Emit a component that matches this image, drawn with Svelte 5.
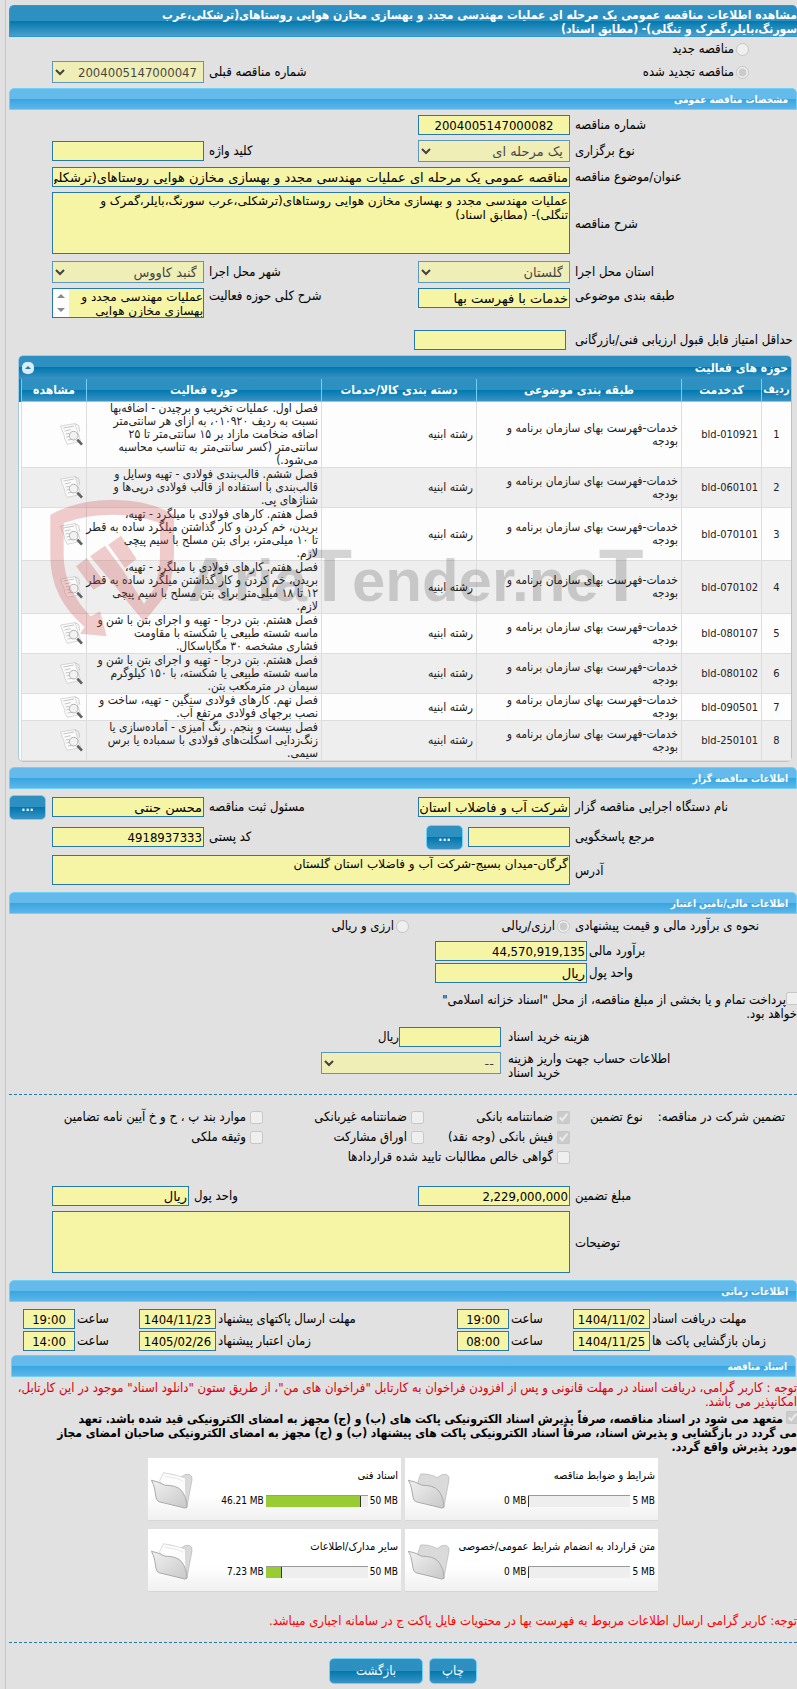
<script>
  const rows = [
    { code: 'bld-010921', text: 'فصل اول. عملیات تخریب و برچیدن - اضافه‌بها\nنسبت به ردیف ۰۱۰۹۲۰، به ازای هر سانتی‌متر\nاضافه ضخامت مازاد بر ۱۵ سانتی‌متر تا ۲۵\nسانتی‌متر (کسر سانتی‌متر به تناسب محاسبه\nمی‌شود.)' },
    { code: 'bld-060101', text: 'فصل ششم. قالب‌بندی فولادی - تهیه وسایل و\nقالب‌بندی با استفاده از قالب فولادی درپی‌ها و\nشناژهای پی.' },
    { code: 'bld-070101', text: 'فصل هفتم. کارهای فولادی با میلگرد - تهیه،\nبریدن، خم کردن و کار گذاشتن میلگرد ساده به قطر\nتا ۱۰ میلی‌متر، برای بتن مسلح با سیم پیچی\nلازم.' },
    { code: 'bld-070102', text: 'فصل هفتم. کارهای فولادی با میلگرد - تهیه،\nبریدن، خم کردن و کار گذاشتن میلگرد ساده به قطر\n۱۲ تا ۱۸ میلی‌متر برای بتن مسلح با سیم پیچی\nلازم.' },
    { code: 'bld-080107', text: 'فصل هشتم. بتن درجا - تهیه و اجرای بتن با شن و\nماسه شسته طبیعی یا شکسته با مقاومت\nفشاری مشخصه ۳۰ مگاپاسکال.' },
    { code: 'bld-080102', text: 'فصل هشتم. بتن درجا - تهیه و اجرای بتن با شن و\nماسه شسته طبیعی یا شکسته، با ۱۵۰ کیلوگرم\nسیمان در مترمکعب بتن.' },
    { code: 'bld-090501', text: 'فصل نهم. کارهای فولادی سنگین - تهیه، ساخت و\nنصب برجهای فولادی مرتفع آب.' },
    { code: 'bld-250101', text: 'فصل بیست و پنجم. رنگ آمیزی - آماده‌سازی یا\nزنگ‌زدایی اسکلت‌های فولادی با سمباده یا برس\nسیمی.' }
  ];
  const docs = [
    { name: 'شرایط و ضوابط مناقصه', max: '5 MB', used: '0 MB', pct: 0 },
    { name: 'اسناد فنی', max: '50 MB', used: '46.21 MB', pct: 93 },
    { name: 'متن قرارداد به انضمام شرایط عمومی/خصوصی', max: '5 MB', used: '0 MB', pct: 0 },
    { name: 'سایر مدارک/اطلاعات', max: '50 MB', used: '7.23 MB', pct: 16 }
  ];
</script>

{#snippet sheetIcon()}
  <svg class="sheet" viewBox="0 0 69 69" aria-hidden="true">
    <path d="M2 9 L45 2 L62 55 L22 64 Q12 48 12 36 Q6 24 2 9Z" fill="#fbfbfb" stroke="#c4c4c4" stroke-width="2" />
    <path d="M10 15 L42 9 M14 24 L32 20 M17 33 L28 31 M19 42 L30 40 M23 51 L42 48" stroke="#c6c6c6" stroke-width="3" />
    <path d="M45 2 L56 8 L59 26" fill="none" stroke="#b5b5b5" stroke-width="2" />
    <circle cx="41" cy="38" r="13" fill="#f0f0f0" fill-opacity=".85" stroke="#b2b2b2" stroke-width="3" />
    <path d="M52 50 L66 65" stroke="#606060" stroke-width="8" />
  </svg>
{/snippet}

{#snippet folderIcon(full)}
  <svg class="folder" viewBox="0 0 130 112" aria-hidden="true">
    <defs>
      <linearGradient id="fold" x1="0" y1="0" x2="1" y2="1">
        <stop offset="0" stop-color="#f1f1f1" /><stop offset="1" stop-color="#c8c8c8" />
      </linearGradient>
    </defs>
    <path d="M30 30 L38 6 Q56 4 76 11 L88 17 Q104 4 116 7 Q126 12 124 24 L108 108 L30 88Z" fill="#dadada" stroke="#b4b4b4" stroke-width="2" />
    {#if full}
      <path d="M26 26 L38 2 L76 10 L104 18 L106 90 L40 70Z" fill="#fcfcfc" stroke="#cccccc" stroke-width="2" />
      <path d="M40 12 L80 20 L98 28" fill="none" stroke="#dddddd" stroke-width="2" />
    {/if}
    <path d="M1 25 Q20 28 42 40 Q76 40 90 54 Q108 74 109 106 Q104 112 94 107 L24 90 Q17 87 15 76 L11 52 Q9 38 1 25Z" fill="url(#fold)" stroke="#a9a9a9" stroke-width="3" />
  </svg>
{/snippet}

<div class="page" dir="rtl">
  <h1>مشاهده اطلاعات مناقصه عمومی یک مرحله ای عملیات مهندسی مجدد و بهسازی مخازن هوایی روستاهای(ترشکلی،عرب<br />سورنگ،بایلر،گمرک و تنگلی)- (مطابق اسناد)</h1>

  <div class="kind"><label><input type="radio" name="kind" disabled />مناقصه جدید</label></div>
  <div class="form">
    <label class="kind again"><input type="radio" name="kind" disabled checked />مناقصه تجدید شده</label>
    <label class="lbl" for="prev">شماره مناقصه قبلی</label>
    <select id="prev" class="num" disabled><option>2004005147000047</option></select>
  </div>

  <h2>مشخصات مناقصه عمومی</h2>
  <div class="form">
    <label class="lbl" for="num">شماره مناقصه</label>
    <input id="num" class="num mid" value="2004005147000082" readonly />
  </div>
  <div class="form">
    <label class="lbl" for="type">نوع برگزاری</label>
    <select id="type" disabled><option>یک مرحله ای</option></select>
    <label class="lbl" for="key">کلید واژه</label>
    <input id="key" readonly />
  </div>
  <div class="form">
    <label class="lbl" for="title">عنوان/موضوع مناقصه</label>
    <input id="title" class="wide" value="مناقصه عمومی یک مرحله ای عملیات مهندسی مجدد و بهسازی مخازن هوایی روستاهای(ترشکلی،عرب سورنگ،بایلر،گمرک و تنگلی)" readonly />
  </div>
  <div class="form">
    <label class="lbl" for="desc">شرح مناقصه</label>
    <textarea id="desc" class="wide tall" readonly value={'عملیات مهندسی مجدد و بهسازی مخازن هوایی روستاهای(ترشکلی،عرب سورنگ،بایلر،گمرک و\nتنگلی)- (مطابق اسناد)'}></textarea>
  </div>
  <div class="form">
    <label class="lbl" for="prov">استان محل اجرا</label>
    <select id="prov" disabled><option>گلستان</option></select>
    <label class="lbl" for="city">شهر محل اجرا</label>
    <select id="city" disabled><option>گنبد کاووس</option></select>
  </div>
  <div class="form top">
    <label class="lbl" for="cat">طبقه بندی موضوعی</label>
    <input id="cat" value="خدمات با فهرست بها" readonly />
    <label class="lbl" for="act">شرح کلی حوزه فعالیت</label>
    <div class="scrollbox">
      <textarea id="act" readonly value={'عملیات مهندسی مجدد و\nبهسازی مخازن هوایی'}></textarea>
      <svg viewBox="0 0 16 28" aria-hidden="true"><path d="M4 9 L8 5 L12 9Z M4 19 L8 23 L12 19Z" fill="#8a8a8a" /></svg>
    </div>
  </div>
  <div class="form score">
    <label class="lbl" for="score">حداقل امتیاز قابل قبول ارزیابی فنی/بازرگانی</label>
    <input id="score" readonly />
  </div>

  <section class="panel">
    <header>
      <span>حوزه های فعالیت</span>
      <button class="fold" aria-label="بستن"><svg viewBox="0 0 12 12"><path d="M3 7 L6 4 L9 7Z" fill="#2779aa" /></svg></button>
    </header>
    <table>
      <colgroup><col class="c1" /><col class="c2" /><col class="c3" /><col class="c4" /><col /><col class="c6" /></colgroup>
      <thead>
        <tr><th class="first">ردیف</th><th>کدخدمت</th><th>طبقه بندی موضوعی</th><th>دسته بندی کالا/خدمات</th><th>حوزه فعالیت</th><th>مشاهده</th></tr>
      </thead>
      <tbody>
        {#each rows as r, i}
          <tr>
            <td class="n">{i + 1}</td>
            <td class="code"><bdi>{r.code}</bdi></td>
            <td>{'خدمات-فهرست بهای سازمان برنامه و\nبودجه'}</td>
            <td>رشته ابنیه</td>
            <td>{r.text}</td>
            <td class="view">{@render sheetIcon()}</td>
          </tr>
        {/each}
      </tbody>
    </table>
    <svg class="mark" viewBox="0 0 1800 420" aria-hidden="true">
      <g fill="#d04a50" fill-opacity=".28">
        <path d="M1 50 Q85 5 187 5 Q295 5 372 50 L372 170 Q372 245 340 300 L282 372 L175 240 L220 218 L282 318 L310 275 Q330 225 330 170 L330 75 Q265 50 187 50 Q110 50 41 75 L41 175 Q43 275 122 355 L150 340 L170 415 L90 407 L104 387 Q1 300 1 175Z" />
        <path d="M78 205 L110 180 L165 255 L130 275Z M120 175 L165 143 L220 218 L175 240Z M175 140 L213 113 L260 183 L225 210Z" />
      </g>
      <text x="414" y="309"><tspan class="cap">A</tspan>ria<tspan class="tee">T</tspan>ender.ne<tspan class="tee">T</tspan></text>
    </svg>
  </section>

  <h2>اطلاعات مناقصه گزار</h2>
  <div class="form btnrow">
    <label class="lbl" for="org">نام دستگاه اجرایی مناقصه گزار</label>
    <input id="org" value="شرکت آب و فاضلاب استان" readonly />
    <label class="lbl" for="resp">مسئول ثبت مناقصه</label>
    <input id="resp" value="محسن جنتی" readonly />
    <button class="dots">...</button>
  </div>
  <div class="form btnrow">
    <label class="lbl" for="ref">مرجع پاسخگویی</label>
    <div class="pair"><input id="ref" readonly /><button class="dots">...</button></div>
    <label class="lbl" for="zip">کد پستی</label>
    <input id="zip" class="num" value="4918937333" readonly />
  </div>
  <div class="form">
    <label class="lbl" for="addr">آدرس</label>
    <textarea id="addr" class="wide short" readonly value={'گرگان-میدان بسیج-شرکت آب و فاضلاب استان گلستان'}></textarea>
  </div>

  <h2>اطلاعات مالی/تامین اعتبار</h2>
  <div class="form radios">
    <span class="lbl">نحوه ی برآورد مالی و قیمت پیشنهادی</span>
    <label class="opt"><input type="radio" name="cur" disabled checked />ارزی/ریالی</label>
    <label class="opt second"><input type="radio" name="cur" disabled />ارزی و ریالی</label>
  </div>
  <div class="money">
    <label class="lbl" for="est">برآورد مالی</label><input id="est" class="num" value="44,570,919,135" readonly />
    <label class="lbl" for="unit">واحد پول</label><input id="unit" value="ریال" readonly />
  </div>
  <label class="treasury"><input type="checkbox" disabled />پرداخت تمام و یا بخشی از مبلغ مناقصه، از محل "اسناد خزانه اسلامی"<br />خواهد بود.</label>
  <div class="fees">
    <label class="lbl" for="fee">هزینه خرید اسناد</label>
    <div class="rial"><input id="fee" readonly /><span>ریال</span></div>
    <label class="lbl two" for="acc">اطلاعات حساب جهت واریز هزینه<br />خرید اسناد</label>
    <select id="acc" disabled><option>--</option></select>
  </div>
  <hr />

  <div class="guar">
    <div class="gl"><span>تضمین شرکت در مناقصه:</span><span>نوع تضمین</span></div>
    <label class="opt"><input type="checkbox" disabled checked />ضمانتنامه بانکی</label>
    <label class="opt"><input type="checkbox" disabled />ضمانتنامه غیربانکی</label>
    <label class="opt"><input type="checkbox" disabled />موارد بند پ ، ح و خ آیین نامه تضامین</label>
    <label class="opt start"><input type="checkbox" disabled checked />فیش بانکی (وجه نقد)</label>
    <label class="opt"><input type="checkbox" disabled />اوراق مشارکت</label>
    <label class="opt"><input type="checkbox" disabled />وثیقه ملکی</label>
    <label class="opt start all"><input type="checkbox" disabled />گواهی خالص مطالبات تایید شده قراردادها</label>
  </div>
  <div class="form amount">
    <label class="lbl" for="amt">مبلغ تضمین</label>
    <input id="amt" class="num" value="2,229,000,000" readonly />
    <label class="lbl" for="unit2">واحد پول</label>
    <input id="unit2" value="ریال" readonly />
  </div>
  <div class="form">
    <label class="lbl" for="note">توضیحات</label>
    <textarea id="note" class="wide tall" readonly></textarea>
  </div>

  <h2>اطلاعات زمانی</h2>
  <div class="times">
    <label class="lbl" for="d1">مهلت دریافت اسناد</label><input id="d1" class="num" value="1404/11/02" readonly />
    <label class="lbl" for="h1">ساعت</label><input id="h1" class="num" value="19:00" readonly />
    <label class="lbl" for="d2">مهلت ارسال پاکتهای پیشنهاد</label><input id="d2" class="num" value="1404/11/23" readonly />
    <label class="lbl" for="h2">ساعت</label><input id="h2" class="num" value="19:00" readonly />
    <label class="lbl" for="d3">زمان بازگشایی پاکت ها</label><input id="d3" class="num" value="1404/11/25" readonly />
    <label class="lbl" for="h3">ساعت</label><input id="h3" class="num" value="08:00" readonly />
    <label class="lbl" for="d4">زمان اعتبار پیشنهاد</label><input id="d4" class="num" value="1405/02/26" readonly />
    <label class="lbl" for="h4">ساعت</label><input id="h4" class="num" value="14:00" readonly />
  </div>

  <h2 class="docsbar">اسناد مناقصه</h2>
  <p class="warn">توجه : کاربر گرامی، دریافت اسناد در مهلت قانونی و پس از افزودن فراخوان به کارتابل "فراخوان های من"، از طریق ستون "دانلود اسناد" موجود در این کارتابل،<br />امکانپذیر می باشد.</p>
  <label class="pledge"><input type="checkbox" disabled checked />متعهد می شود در اسناد مناقصه، صرفاً پذیرش اسناد الکترونیکی پاکت های (ب) و (ج) مجهز به امضای الکترونیکی قید شده باشد. تعهد<br />می گردد در بازگشایی و پذیرش اسناد، صرفاً اسناد الکترونیکی پاکت های پیشنهاد (ب) و (ج) مجهز به امضای الکترونیکی صاحبان امضای مجاز<br />مورد پذیرش واقع گردد.</label>
  <div class="cards">
    {#each docs as d}
      <article>
        <div class="info">
          <h3>{d.name}</h3>
          <div class="meter">
            <bdi>{d.max}</bdi>
            <div class="track"><div class="fill" style="width: {d.pct}%"></div></div>
            <bdi>{d.used}</bdi>
          </div>
        </div>
        {@render folderIcon(d.pct > 0)}
      </article>
    {/each}
  </div>
  <p class="note">توجه: کاربر گرامی ارسال اطلاعات مربوط به فهرست بها در محتویات فایل پاکت ج در سامانه اجباری میباشد.</p>
  <hr />
  <div class="actions"><button>چاپ</button><button class="back">بازگشت</button></div>
</div>

<style>
  :global(body) { background: #e1e1e1; }
  .page {
    box-sizing: border-box; margin-left: 5px; padding: 5px 0 5px 3px;
    border-left: 1px solid #c8c8c8; overflow: hidden;
    font: 13px/14px "DejaVu Sans Condensed", "DejaVu Sans", sans-serif; color: #000;
  }
  .page :global(*) { box-sizing: border-box; }
  h1, h2, h3, p { margin: 0; font-weight: bold; }
  h1 {
    font-size: 12px; line-height: 14px; color: #fff; padding-top: 2px; white-space: nowrap;
    border: 1px solid #2f96dc; border-right: 0; border-radius: 5px 5px 0 0;
    background: linear-gradient(#2d90c0 50%, #0078ae 50%, #4b9fcb);
  }
  h2 {
    height: 22px; margin-top: 5px; padding: 0 8px; font-size: 10px; line-height: 21px; color: #fff;
    border: 1px solid #70d0f8; border-radius: 5px 5px 0 0;
    background: linear-gradient(#64baea 50%, #38a5e0 50%, #5cb6ea);
  }
  input, textarea, select {
    width: 100%; min-width: 0; margin: 0; border: 1px solid #2779aa; border-radius: 0;
    background: #f6f4a5; color: #000; font-family: "DejaVu Sans", sans-serif; font-size: 13px;
  }
  input { height: 20px; padding: 1px 1px 0; }
  select { height: 22px; padding: 0 2px; }
  .num { font-family: "DejaVu Sans Condensed", "DejaVu Sans", sans-serif; }
  textarea { display: block; resize: none; overflow: hidden; padding: 1px; font-size: 12px; line-height: 14px; }
  input[type='radio'], input[type='checkbox'] { width: 13px; height: 13px; flex: none; padding: 0; }
  .mid, .times input { text-align: center; }
  .form {
    display: grid; grid-template-columns: 222px 152px 1fr 152px 38px; column-gap: 5px;
    align-items: center; margin-top: 5px;
  }
  .lbl { text-align: left; white-space: nowrap; }
  .wide { grid-column: 2 / 5; }
  .tall { height: 62px; margin-bottom: 2px; }
  .short { height: 30px; margin-bottom: 2px; }
  .top { align-items: start; }
  .top .lbl { padding-top: 1px; }
  .kind { display: flex; align-items: center; height: 24px; padding-right: 48px; }
  .kind label { display: flex; align-items: center; gap: 2px; }
  .again { grid-column: 1 / 3; gap: 2px; height: 22px; }
  .kind + .form { margin-top: 0; }
  .scrollbox { display: flex; height: 30px; border: 1px solid #2779aa; }
  .scrollbox textarea { flex: 1; border: 0; height: 28px; padding: 1px 0 0; }
  .scrollbox svg { width: 16px; background: #fff; flex: none; }
  .score { column-gap: 9px; margin-top: 12px; }
  .panel { position: relative; margin: 5px 5px 0 9px; padding-left: 2px; border: 1px solid #a6c9e2; border-radius: 5px; background: #fff; }
  .panel header {
    display: flex; justify-content: space-between; align-items: center; height: 23px; margin-left: -2px; padding: 0 3px;
    border-radius: 4px 4px 0 0; color: #fff; font-size: 12px; font-weight: bold;
    background: linear-gradient(#2d90c0 50%, #0078ae 50%, #3a93c4);
  }
  .fold { width: 12px; height: 12px; padding: 0; border: 0; border-radius: 5px; background: #dcebf8; }
  .fold svg { display: block; }
  table { width: 100%; table-layout: fixed; border-collapse: separate; border-spacing: 0; }
  .c1 { width: 30px; } .c2 { width: 80px; } .c3 { width: 205px; } .c4 { width: 155px; } .c6 { width: 65px; }
  th {
    height: 23px; padding: 0; font-size: 12px; line-height: 14px; color: #fff; white-space: nowrap; overflow: hidden;
    border-left: 1px solid #70d0f8; border-bottom: 1px solid #70d0f8;
    background: linear-gradient(#2d90c0 50%, #0078ae 50%, #3a93c4);
  }
  th.first { font-size: 11px; }
  th:last-child { box-shadow: -2px 0 0 #0f80b4; }
  td {
    padding: 0 3px 0 0; font-size: 12px; line-height: 13px; color: #222; white-space: pre; vertical-align: middle;
    border-left: 1px solid #dddddd; border-bottom: 1px solid #dddddd; background: #fdfdfd;
  }
  tr:nth-child(even) td { background: #eee; }
  td.n { padding: 0; text-align: center; }
  td.n, td.code { font-size: 11px; }
  .sheet { display: block; width: 23px; height: 23px; }
  .mark { position: absolute; left: 31px; top: 142px; width: 600px; height: 140px; pointer-events: none; }
  .mark text { direction: ltr; font: bold 180px "Liberation Sans", sans-serif; fill: #000; fill-opacity: .16; }
  .mark .cap { font-size: 190px; }
  .mark .tee { font-size: 220px; }
  button {
    height: 26px; padding: 0; color: #fff; font-family: inherit; font-size: 13px; line-height: 14px;
    border: 1px solid #70d0f8; border-radius: 5px; background: linear-gradient(#2d90c0 50%, #0078ae 50%, #3a93c4);
  }
  .btnrow { min-height: 26px; }
  .btnrow + .btnrow { margin-top: 4px; }
  .dots { width: 37px; height: 25px; font-size: 12px; font-weight: bold; }
  .form > .dots { justify-self: end; }
  .pair { display: flex; gap: 5px; padding-left: 8px; }
  .pair input { flex: 1; align-self: center; }
  .opt { display: flex; align-items: center; gap: 4px; white-space: nowrap; }
  .radios .opt { gap: 2px; height: 13px; }
  .radios .second { padding-right: 4px; }
  .money { display: grid; grid-template-columns: 208px 152px; gap: 2px; align-items: center; margin-top: 8px; }
  .treasury { display: block; margin-top: 9px; }
  .treasury input, .pledge input { vertical-align: -1px; margin-right: -2px; }
  .pledge input { margin-left: 3px; }
  .fees { display: grid; grid-template-columns: 289px 180px; column-gap: 7px; row-gap: 5px; align-items: center; margin-top: 6px; }
  .rial { display: flex; align-items: center; }
  .rial input { width: 102px; }
  .two { margin-bottom: -6px; }
  hr { margin: 20px 0 0; border: 0; border-top: 1px dashed #2779aa; }
  .guar { display: grid; grid-template-columns: 227px 146px 161px 1fr; grid-auto-rows: 20px; align-items: center; margin-top: 12px; }
  .gl { display: flex; gap: 15px; padding-right: 12px; white-space: nowrap; }
  .start { grid-column-start: 2; }
  .all { grid-column-end: 5; }
  .amount { grid-template-columns: 222px 152px 1fr 137px 38px; margin-top: 19px; }
  .times { display: grid; grid-template-columns: 145px 77px 60px 52px 1fr 77px 60px 52px 12px; gap: 2px; align-items: center; margin-top: 7px; }
  .times label:nth-of-type(4n + 1) { grid-column-start: 1; }
  .docsbar { margin: 4px 1px 0 2px; }
  .warn { margin-top: 4px; color: #d8000c; font-weight: normal; white-space: nowrap; }
  .pledge { display: block; margin-top: 2px; font-size: 12px; font-weight: bold; white-space: nowrap; }
  .cards { display: grid; grid-template-columns: 253px 253px; justify-content: center; gap: 8px 4px; margin-top: 4px; }
  article {
    display: flex; justify-content: space-between; height: 63px; padding: 11px 3px 0; font-size: 10px;
    border-bottom: 1px solid #d6d6d6; background: linear-gradient(#fff 60%, #f0f0f0);
  }
  .info { width: 0; }
  h3 { height: 14px; font-size: 11px; line-height: 14px; font-weight: normal; white-space: nowrap; }
  .meter { display: flex; align-items: center; gap: 2px; margin-top: 11px; white-space: nowrap; }
  .track { flex: none; width: 102px; height: 12px; border-top: 1px solid #999; background: #eee; direction: ltr; }
  .fill { height: 100%; background: #9c3; border-right: 1px solid #333; }
  .folder { width: 43px; height: 37px; margin-top: 3px; }
  .note { margin-top: 22px; color: #f00; font-weight: normal; white-space: nowrap; }
  .note + hr { margin-top: 14px; }
  .actions { display: flex; justify-content: center; gap: 6px; margin-top: 15px; }
  .actions button { width: 48px; }
  .actions .back { width: 94px; }
</style>
